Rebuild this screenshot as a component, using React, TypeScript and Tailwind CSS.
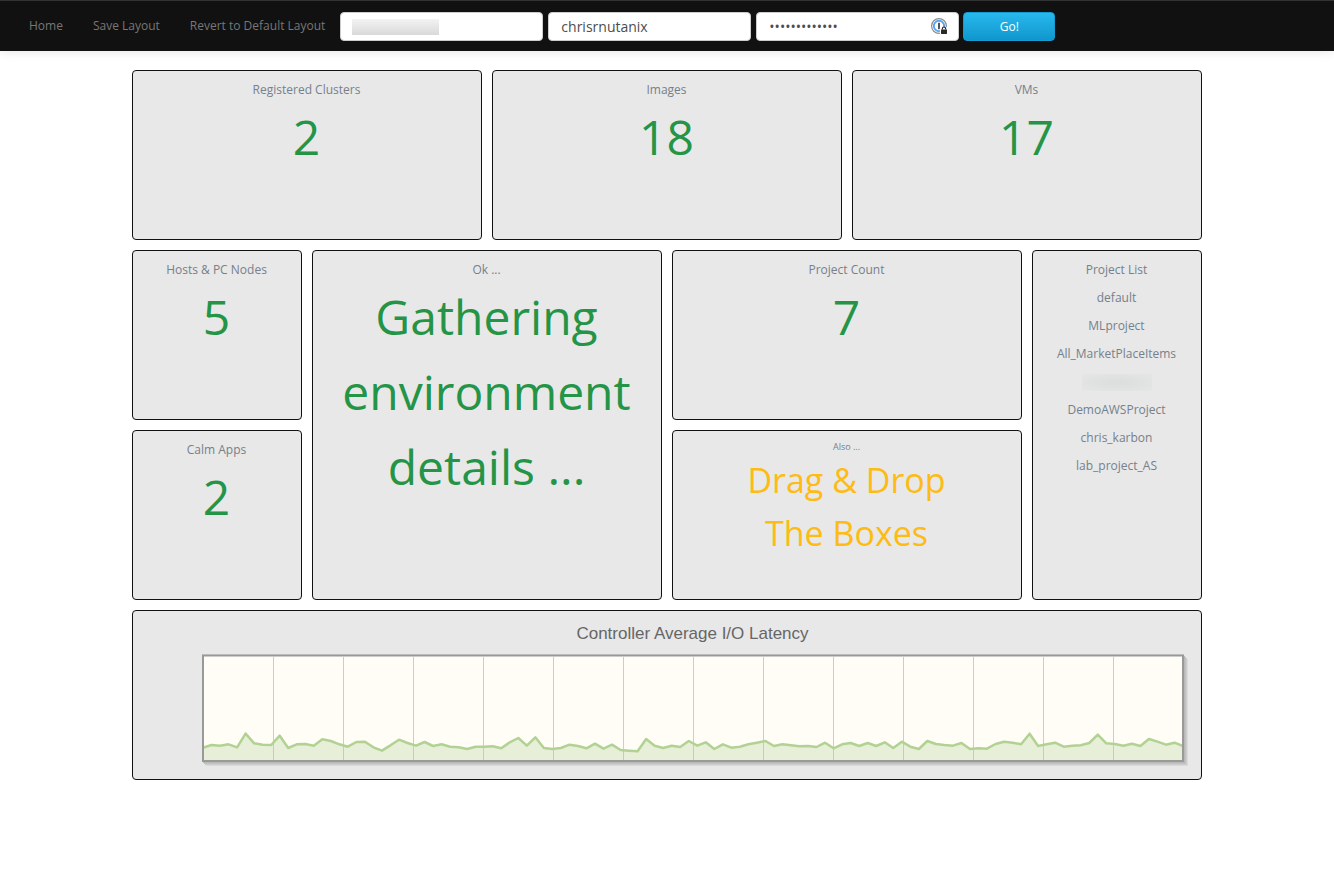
import type { ReactNode } from 'react';

const latency = [
  413, 405, 407, 403, 412, 371, 400, 404, 405, 377, 414, 403, 402, 407, 388, 393, 403, 410, 396, 395,
  412, 422, 406, 389, 399, 407, 396, 408, 403, 410, 412, 417, 410, 410, 409, 415, 397, 384, 407, 382,
  414, 417, 414, 404, 408, 415, 401, 416, 404, 420, 422, 424, 387, 407, 414, 407, 411, 393, 407, 397,
  417, 403, 413, 410, 403, 398, 393, 408, 403, 406, 409, 408, 411, 398, 415, 403, 399, 408, 399, 408,
  397, 414, 395, 410, 417, 393, 402, 405, 407, 399, 417, 415, 416, 402, 395, 398, 403, 371, 408, 403,
  398, 410, 407, 406, 399, 374, 400, 402, 407, 401, 408, 387, 395, 404, 398, 408,
];

const CHART_WIDTH = 978;
const CHART_HEIGHT = 104;

// The series runs one unit past the plot area on both sides.
const points = latency
  .map((v, i) => `${((i * (CHART_WIDTH + 2)) / (latency.length - 1) - 1).toFixed(2)},${((v - 138) / 3).toFixed(2)}`)
  .join(' ');

function Widget({ className = '', children }: { className?: string; children: ReactNode }) {
  return (
    <section
      className={`rounded-[4px] border border-[#111] bg-[#e8e8e8] pl-2 pr-[9px] pt-[9px] text-center text-[12px] leading-[19px] text-[#76808a] ${className}`}
    >
      {children}
    </section>
  );
}

function Stat({ title, value, className }: { title: string; value: string; className?: string }) {
  return (
    <Widget className={className}>
      <h2>{title}</h2>
      <p className="text-[48px] leading-[75px] text-[#249446]">{value}</p>
    </Widget>
  );
}

function LatencyChart() {
  return (
    <div className="ml-[61px] mr-2 mt-3 border-2 border-t border-[#999] bg-[#fffdf6] shadow-[0_-1px_0_#bbb,1px_1px_0_#b9b9b9,2px_2px_0_#c2c2c2,3px_3px_0_#cdcdcd,4px_4px_0_#dadada]">
      <svg
        viewBox={`0 0 ${CHART_WIDTH} ${CHART_HEIGHT}`}
        preserveAspectRatio="none"
        className="block h-[104px] w-full"
        role="img"
        aria-label="Controller Average I/O Latency"
      >
        <path d={`M0 0.5H${CHART_WIDTH}`} stroke="#ccc" />
        {Array.from({ length: 13 }, (_, i) => (
          <path key={i} d={`M${(i + 1) * 70 - 0.5} 0V${CHART_HEIGHT}`} stroke="#ccc" vectorEffect="non-scaling-stroke" />
        ))}
        <polygon points={`-1,${CHART_HEIGHT} ${points} ${CHART_WIDTH + 1},${CHART_HEIGHT}`} fill="#b2d294" fillOpacity="0.3" />
        <polyline points={points} fill="none" stroke="#b2d294" strokeWidth="2.5" strokeLinejoin="round" />
      </svg>
    </div>
  );
}

function PasswordManagerIcon() {
  return (
    <svg width="18" height="18" viewBox="0 0 18 18" className="absolute right-[11px] top-[5px]" aria-hidden="true">
      <circle cx="9" cy="9" r="7.4" fill="none" stroke="#8d8d8d" strokeWidth="1.2" />
      <circle cx="9" cy="9" r="5.2" fill="none" stroke="#56a6f8" strokeWidth="1.9" />
      <rect x="8" y="5.8" width="2" height="6.4" fill="#555" />
      <path d="M9.9 10.2H18v8H9.9z" fill="#fff" />
      <rect x="11" y="12.4" width="6" height="4.6" rx="0.4" fill="#2a2a2a" />
      <path d="M12.4 12.6v-1a1.6 1.6 0 0 1 3.2 0v1" fill="none" stroke="#2a2a2a" strokeWidth="1.2" />
    </svg>
  );
}

const inputClass =
  'block h-[29px] w-full rounded-[4px] border border-[#ccc] bg-white px-3 text-[14px] text-[#4d4d4d] outline-none';
const projectsBefore = ['default', 'MLproject', 'All_MarketPlaceItems'];
const projectsAfter = ['DemoAWSProject', 'chris_karbon', 'lab_project_AS'];

export default function App() {
  return (
    <div className="min-h-screen bg-white font-['Open_Sans','Noto_Sans',sans-serif]">
      <nav className="flex h-[51px] items-center border-t border-[#333] bg-[#111] pl-[14px] text-[12px] text-[#777] shadow-[0_1px_10px_rgba(0,0,0,0.1)]">
        <a href="#home" className="px-[15px]">Home</a>
        <a href="#save" className="px-[15px]">Save Layout</a>
        <a href="#revert" className="px-[15px]">Revert to Default Layout</a>
        <form className="flex items-center" onSubmit={(e) => e.preventDefault()}>
          <div className="relative mr-[5px] w-[203px]">
            <input type="text" aria-label="Cluster address" className={inputClass} />
            <span className="pointer-events-none absolute left-3 top-[7px] h-4 w-[87px] bg-linear-to-b from-[#f3f3f3] to-[#d9d9d9]" />
          </div>
          <div className="mr-[5px] w-[203px]">
            <input type="text" aria-label="Username" defaultValue="chrisrnutanix" className={inputClass} />
          </div>
          <div className="relative mr-1 w-[203px]">
            <input type="password" aria-label="Password" defaultValue="abcdefghijklm" className={inputClass} />
            <PasswordManagerIcon />
          </div>
          <button
            type="submit"
            className="h-[29px] w-[92px] rounded-[4px] border border-[#149bd0] bg-linear-to-b from-[#27b8ee] to-[#0f97cd] pt-px text-[12px] text-white"
          >
            Go!
          </button>
        </form>
      </nav>

      <main className="mx-auto mt-[19px] grid w-full max-w-[1070px] auto-rows-[170px] grid-cols-6 gap-[10px]">
        <Stat title="Registered Clusters" value="2" className="col-span-2" />
        <Stat title="Images" value="18" className="col-span-2" />
        <Stat title="VMs" value="17" className="col-span-2" />

        <Stat title="Hosts &amp; PC Nodes" value="5" />
        <Stat title="Ok ..." value="Gathering environment details ..." className="col-span-2 row-span-2" />
        <Stat title="Project Count" value="7" className="col-span-2" />
        <Widget className="row-span-2">
          <h2>Project List</h2>
          <ul className="mt-[9px] flex flex-col items-center gap-[9px]">
            {projectsBefore.map((p) => (
              <li key={p}>{p}</li>
            ))}
            <li className="flex h-[19px] items-end">
              <span className="block h-[17px] w-[70px] bg-[radial-gradient(ellipse_at_center,#dcdddd_0%,#dfe0e0_40%,#e6e6e6_100%)]" />
            </li>
            {projectsAfter.map((p) => (
              <li key={p}>{p}</li>
            ))}
          </ul>
        </Widget>
        <Stat title="Calm Apps" value="2" />
        <Widget className="col-span-2">
          <h2 className="text-[9px] leading-[14px]">Also ...</h2>
          <p className="text-[34px] leading-[53px] text-[#fdbb14]">
            Drag &amp; Drop
            <br />
            The Boxes
          </p>
        </Widget>

        <Widget className="col-span-6">
          <h2 className="ml-[52px] mt-1 font-['Liberation_Sans',Arial,sans-serif] text-[17px] text-[#666]">
            Controller Average I/O Latency
          </h2>
          <LatencyChart />
        </Widget>
      </main>
    </div>
  );
}
